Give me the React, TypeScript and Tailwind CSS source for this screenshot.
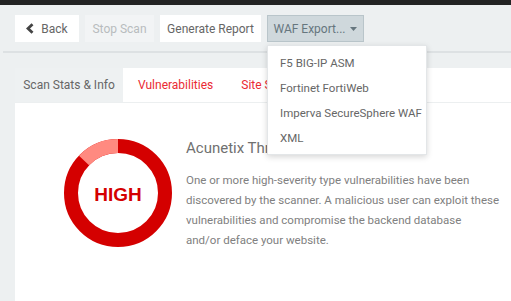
import React from "react";

const font = { fontFamily: "Roboto, 'Open Sans', sans-serif" };

function Donut() {
  const r = 47;
  const c = 2 * Math.PI * r;
  const light = 0.13;
  return (
    <svg width="110" height="110" viewBox="0 0 110 110">
      <g transform="rotate(-90 55 55)">
        <circle cx="55" cy="55" r={r} fill="none" stroke="#d40000" strokeWidth="14" />
        <circle
          cx="55"
          cy="55"
          r={r}
          fill="none"
          stroke="#ff8a80"
          strokeWidth="14"
          strokeDasharray={`${c * light} ${c}`}
          strokeDashoffset={-c * (1 - light)}
        />
      </g>
    </svg>
  );
}

export default function App() {
  return (
    <div className="relative w-[511px] h-[301px] overflow-hidden bg-[#edf0f1]" style={font}>
      <div className="h-[5px] bg-[#232323]" />
      <div className="flex gap-[6px] pl-[15px] pt-[10px] h-[46px] text-[12px]">
        <button className="h-[27px] w-[64px] bg-white text-[#666] flex items-center justify-center gap-[7px]">
          <svg width="8" height="11" viewBox="0 0 8 11">
            <path d="M6.5 1.2 L2 5.5 L6.5 9.8" stroke="#444" strokeWidth="2.8" fill="none" />
          </svg>
          <span>Back</span>
        </button>
        <button className="h-[27px] w-[69px] bg-[#f2f4f5] text-[#b8bcbe]">Stop Scan</button>
        <button className="h-[27px] w-[101px] bg-white text-[#666]">Generate Report</button>
        <button className="h-[27px] w-[97px] bg-[#cfd8dc] border border-[#b9c5ca] text-[#66767e] flex items-center justify-center gap-[5px]">
          <span>WAF Export...</span>
          <svg width="7" height="4" viewBox="0 0 7 4">
            <path d="M0 0 L7 0 L3.5 4 Z" fill="#66767e" />
          </svg>
        </button>
      </div>
      <div className="ml-[3px] border-t-2 border-[#dde1e3] h-[17px]" />
      <div className="ml-[15px] bg-white flex h-[35px] border-b border-[#eceff0] text-[12px]">
        <div className="w-[108px] bg-[#eef1f2] text-[#666] flex items-center justify-center">Scan Stats &amp; Info</div>
        <div className="pl-[15px] text-[#ea2a33] flex items-center">Vulnerabilities</div>
        <div className="pl-[28px] text-[#ea2a33] flex items-center">Site Structure</div>
      </div>
      <div className="ml-[15px] bg-white h-[200px] flex">
        <div className="pl-[48px] pt-[35px] relative shrink-0">
          <Donut />
          <div className="absolute left-[48px] top-[37px] w-[110px] h-[110px] flex items-center justify-center text-[#d40000] font-bold text-[19px]" style={{ fontFamily: "'Liberation Sans', Arial, sans-serif" }}>
            HIGH
          </div>
        </div>
        <div className="pl-[13px] pt-[35px]">
          <div className="text-[15px] text-[#707070] leading-[20px]">Acunetix Threat Level 3</div>
          <p className="mt-[12px] text-[11.5px] leading-[20px] text-[#808080] whitespace-nowrap">
            One or more high-severity type vulnerabilities have been
            <br />
            discovered by the scanner. A malicious user can exploit these
            <br />
            vulnerabilities and compromise the backend database
            <br />
            and/or deface your website.
          </p>
        </div>
      </div>
      <div className="absolute left-[267px] top-[45px] w-[160px] h-[110px] bg-white shadow-[0_2px_6px_rgba(0,0,0,0.16)] border border-[#e3e6e8] pt-[5px] text-[11.5px] text-[#666] whitespace-nowrap">
        <div className="h-[25px] pl-[12px] flex items-center">F5 BIG-IP ASM</div>
        <div className="h-[25px] pl-[12px] flex items-center">Fortinet FortiWeb</div>
        <div className="h-[25px] pl-[12px] flex items-center">Imperva SecureSphere WAF</div>
        <div className="h-[25px] pl-[12px] flex items-center">XML</div>
      </div>
    </div>
  );
}
